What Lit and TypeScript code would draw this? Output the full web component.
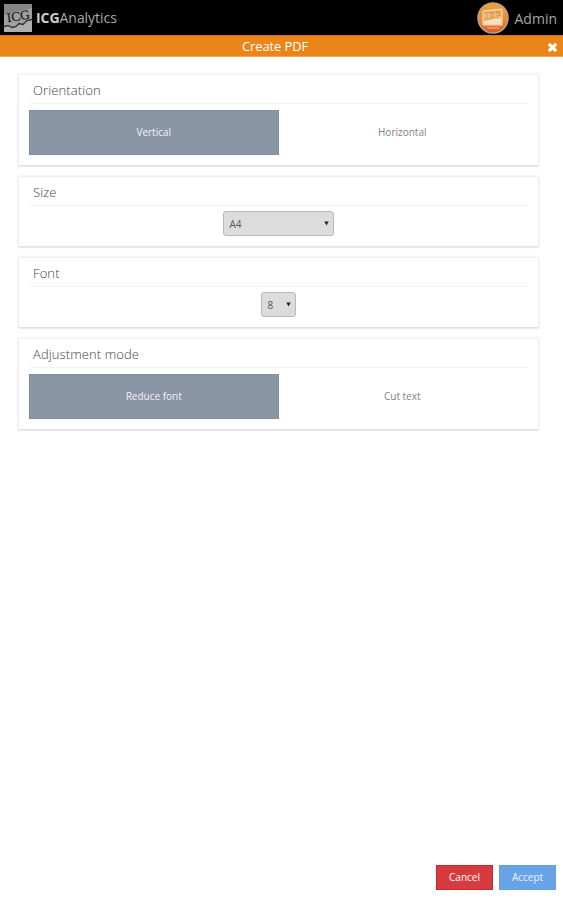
import { LitElement, html, css, svg } from "lit";
import { customElement, property } from "lit/decorators.js";

@customElement("option-card")
class OptionCard extends LitElement {
  @property() heading = "";
  static styles = css`
    :host { display: block; box-sizing: border-box; background: #fff; border: 1px solid #f0f0f0;
      border-bottom-color: #e2e2e2; border-radius: 2px; box-shadow: 0 1px 1px #e8e8e8, 0 0 1px 1px #f6f6f6; padding: 0 10px; }
    h2 { margin: 0; height: 28px; line-height: 30px; padding-left: 4px; border-bottom: 1px solid #f3f3f3;
      font-size: 13px; font-weight: 300; color: #444; letter-spacing: 0.1px; }
    .body { padding-top: 6px; display: flex; justify-content: center; }
  `;
  render() {
    return html`<h2>${this.heading}</h2><div class="body"><slot></slot></div>`;
  }
}

@customElement("app-root")
class AppRoot extends LitElement {
  static styles = css`
    :host { display: flex; flex-direction: column; box-sizing: border-box; width: 100%; height: 100vh; background: #fff;
      font-family: "Open Sans", "Noto Sans", sans-serif; overflow: hidden; }
    header { height: 35px; flex: none; background: #000; display: flex; align-items: center; color: #b5b5b5;
      padding: 0 6px 0 4px; box-sizing: border-box; }
    .logo { width: 28px; height: 28px; display: block; }
    .brand { font-size: 14px; margin-left: 4px; flex: 1; line-height: 20px; letter-spacing: -0.05px; color: #a9a9a9; font-weight: 400; }
    .brand b { font-weight: 700; color: #cfcfcf; }
    .avatar { width: 32px; height: 32px; display: block; margin: 0 1px 0 -1px; }
    .user { font-size: 14px; margin-left: 5px; line-height: 20px; padding-top: 3px; color: #a6a6a6; }
    .title { height: 22px; flex: none; background: #eb8419; border-top: 1px solid #d77510; border-bottom: 1px solid #f3a453; box-sizing: border-box;
      display: flex; align-items: center; justify-content: center; color: #fff; font-size: 13px; line-height: 20px; position: relative; }
    .name { padding-right: 13px; letter-spacing: -0.12px; }
    .close { position: absolute; right: 5px; top: 6px; width: 11px; height: 11px; }
    main { flex: 1; padding: 17px 24px 0 18px; display: flex; flex-direction: column; }
    .tall { height: 92px; margin-bottom: 10px; }
    .short { height: 71px; margin-bottom: 10px; }
    .choice { flex: 1; height: 45px; box-sizing: border-box; display: flex; align-items: center; justify-content: center;
      font-size: 10px; line-height: 14px; padding-bottom: 1px; color: #7d828c; }
    .choice:last-child { margin-right: 2px; }
    .on { background: #8a95a6; border: 1px solid #818da1; color: #f1f3f6; }
    .select { box-sizing: border-box; height: 25px; border: 1px solid #b9b9b9; border-radius: 3px; background: #dcdcdc;
      display: flex; align-items: center; justify-content: space-between; font-size: 10px; color: #555;
      padding: 0 4px 0 6px; margin: -1px 1px 0 0; }
    .wide { width: 111px; }
    .narrow { width: 35px; }
    .arrow { width: 5px; height: 5px; }
    footer { flex: none; display: flex; justify-content: flex-end; gap: 7px; padding: 0 7px 10px 0; }
    .btn { width: 57px; height: 25px; box-sizing: border-box; display: flex; align-items: center; justify-content: center;
      font-size: 10px; line-height: 14px; padding-bottom: 1px; color: #fff; }
    .cancel { margin-right: -1px; background: #d63c3f; border: 1px solid #cb2528; }
    .accept { background: #68a3e8; border: 1px solid #629fe6; color: #e9f2fd; }
  `;

  arrow() {
    return html`<svg class="arrow" viewBox="0 0 5 5">${svg`<path d="M.3 .5h4.4L2.5 4.6z" fill="#222"/>`}</svg>`;
  }

  render() {
    return html`
      <header>
        <svg class="logo" viewBox="0 0 28 28">
          <path d="M0 0h28v28H0z" fill="#a0a0a0"/>
          <path d="M0 0h28v4L0 11z" fill="#868686"/>
          <path d="M0 22.5l4-1 4 2 4-1 3-3 4 1 4-4 5-1v12.500H0z" fill="#adadad"/>
          <path d="M0 22.500l4-1 4 2 4-1 3-3 4 1 4-4 5-1" fill="none" stroke="#303030" stroke-width="1.3"/>
          <text x="3" y="16.500" transform="rotate(-9 14 14)" font-family="Liberation Serif, serif" font-size="13"
            font-weight="400" textLength="23" lengthAdjust="spacingAndGlyphs" fill="#222" stroke="#222" stroke-width=".3">ICG</text>
        </svg>
        <div class="brand"><b>ICG</b>Analytics</div>
        <svg class="avatar" viewBox="0 0 32 32">
          <defs><linearGradient id="g" x2="0" y2="1"><stop offset="0" stop-color="#eda23a"/><stop offset=".55" stop-color="#e98a36"/><stop offset="1" stop-color="#dd5626"/></linearGradient></defs>
          <circle cx="16" cy="16" r="15" fill="url(#g)" stroke="#b8a48c" stroke-width="1.5"/>
          <path d="M6 9l19-2v16H6z" fill="#efac63" stroke="#fae3c4" stroke-width="1"/>
          <path d="M7 19l6-1 4-1.500 7-1v7H7z" fill="#f9dfbd"/>
          <text x="7" y="16.500" font-family="Liberation Serif, serif" font-size="9.5" font-weight="700" textLength="17"
            lengthAdjust="spacingAndGlyphs" fill="#fae3c4" stroke="#c87427" stroke-width=".35" transform="rotate(-4 16 14)">ICG</text>
          <path d="M10 26h12" stroke="#f4bd93" stroke-width="1"/>
        </svg>
        <div class="user">Admin</div>
      </header>
      <div class="title">
        <span class="name">Create PDF</span>
        <svg class="close" viewBox="0 0 11 11"><path d="M1.8 1.8l7.4 7.4M9.2 1.8l-7.4 7.4" stroke="#fff" stroke-width="3.3"/></svg>
      </div>
      <main>
        <option-card class="tall" heading="Orientation">
          <div class="choice on">Vertical</div><div class="choice">Horizontal</div>
        </option-card>
        <option-card class="short" heading="Size"><div class="select wide"><span>A4</span>${this.arrow()}</div></option-card>
        <option-card class="short" heading="Font"><div class="select narrow"><span>8</span>${this.arrow()}</div></option-card>
        <option-card class="tall" heading="Adjustment mode">
          <div class="choice on">Reduce font</div><div class="choice">Cut text</div>
        </option-card>
      </main>
      <footer><div class="btn cancel">Cancel</div><div class="btn accept">Accept</div></footer>
    `;
  }
}
